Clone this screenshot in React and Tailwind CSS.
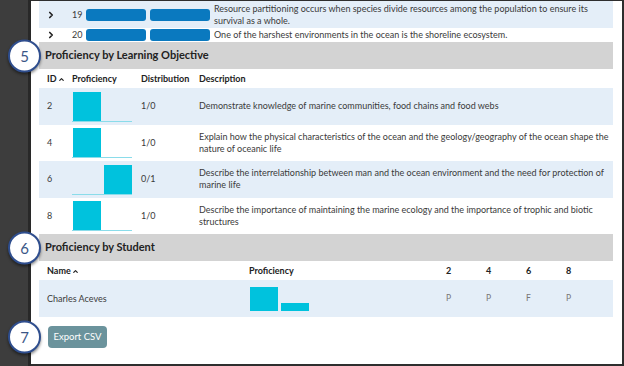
import { ChevronRight, ChevronUp } from "lucide-react"

const objectives = [
    { id: 2, bars: [1, 0], dist: '1/0', lines: ['Demonstrate knowledge of marine communities, food chains and food webs'] },
    { id: 4, bars: [1, 0], dist: '1/0', lines: ['Explain how the physical characteristics of the ocean and the geology/geography of the ocean shape the', 'nature of oceanic life'] },
    { id: 6, bars: [0, 1], dist: '0/1', lines: ['Describe the interrelationship between man and the ocean environment and the need for protection of', 'marine life'] },
    { id: 8, bars: [1, 0], dist: '1/0', lines: ['Describe the importance of maintaining the marine ecology and the importance of trophic and biotic', 'structures'] },
]

function Badge({ n, className = "left-[-31px]" }) {
    return (
        <div className={`absolute ${className} top-1/2 -translate-y-1/2 w-[33px] h-[33px] rounded-full bg-white border-[2.5px] border-[#2f4e8e] shadow-[0_2px_3px_rgba(0,0,0,0.45)] flex items-center justify-center text-[15px] font-normal text-[#3b5687]`}>
            {n}
        </div>
    )
}

function SectionHeader({ n, title }) {
    return (
        <div className="relative h-[27px] bg-[#d3d3d3] flex items-center pl-[6px] text-[11px] font-bold text-[#222]">
            <Badge n={n} />
            {title}
        </div>
    )
}

function SortCaret() {
    return <ChevronUp className="inline w-[7px] h-[7px] ml-[1px] align-middle" strokeWidth={4} />
}

function Chart({ bars, h }) {
    return (
        <div className="relative w-[60px] flex items-end gap-[3px] border-b border-[#8adcea]" style={{ height: h }}>
            {bars.map((b, i) => (
                <div key={i} className="w-[28px] shrink-0 bg-[#00c2dd] first:ml-[1px]" style={{ height: b * (h - 2) }} />
            ))}
        </div>
    )
}

export default function App() {
    return (
        <div className="w-[624px] h-[366px] bg-[#2e2e2e] flex overflow-hidden" style={{ fontFamily: 'Lato, "Open Sans", sans-serif' }}>
            <div className="w-[31px] shrink-0 bg-[#3d3d3d] border-r-[3px] border-[#282828]" />
            <div className="flex-1 bg-white mt-[1px] mr-[2px] mb-[2px] pl-[8px] pr-[9px] text-[9px] text-[#3a3a3a]">
                <div className="flex items-center h-[27px] bg-[#e4eef8] leading-[12px]">
                    <ChevronRight className="w-[10px] h-[10px] shrink-0 ml-[7px] text-[#222]" strokeWidth={4} />
                    <span className="w-[14px] shrink-0 ml-[16px]">19</span>
                    <div className="w-[60px] shrink-0 h-[12px] rounded-[3px] bg-[#0a79bf]" />
                    <div className="w-[60px] shrink-0 h-[12px] rounded-[3px] bg-[#0a79bf] ml-[4px]" />
                    <div className="ml-[4px] whitespace-nowrap">
                        <div>Resource partitioning occurs when species divide resources among the population to ensure its</div>
                        <div>survival as a whole.</div>
                    </div>
                </div>
                <div className="flex items-center h-[14px] leading-[12px]">
                    <ChevronRight className="w-[10px] h-[10px] shrink-0 ml-[7px] text-[#222]" strokeWidth={4} />
                    <span className="w-[14px] shrink-0 ml-[16px]">20</span>
                    <div className="w-[60px] shrink-0 h-[12px] rounded-[3px] bg-[#0a79bf]" />
                    <div className="w-[60px] shrink-0 h-[12px] rounded-[3px] bg-[#0a79bf] ml-[4px]" />
                    <span className="ml-[4px]">One of the harshest environments in the ocean is the shoreline ecosystem.</span>
                </div>

                <SectionHeader n={5} title="Proficiency by Learning Objective" />
                <div className="grid grid-cols-[33px_69px_58px_1fr] h-[19px] items-center font-bold text-[#222]">
                    <span className="pl-[8px]">ID<SortCaret /></span>
                    <span>Proficiency</span>
                    <span>Distribution</span>
                    <span>Description</span>
                </div>
                {objectives.map((o, i) => (
                    <div key={o.id} className={`grid grid-cols-[33px_69px_58px_1fr] h-[36.5px] items-center leading-[12px] ${i % 2 === 0 ? 'bg-[#e4eef8]' : 'bg-white'}`}>
                        <span className="pl-[8px]">{o.id}</span>
                        <Chart bars={o.bars} h={31} />
                        <span>{o.dist}</span>
                        <div className="whitespace-nowrap">
                            {o.lines.map(l => <div key={l}>{l}</div>)}
                        </div>
                    </div>
                ))}

                <SectionHeader n={6} title="Proficiency by Student" />
                <div className="grid grid-cols-[210px_197px_40px_40px_40px_1fr] h-[19px] items-center font-bold text-[#222]">
                    <span className="pl-[8px]">Name<SortCaret /></span>
                    <span>Proficiency</span>
                    <span>2</span>
                    <span>4</span>
                    <span>6</span>
                    <span>8</span>
                </div>
                <div className="grid grid-cols-[210px_197px_40px_40px_40px_1fr] h-[37px] items-center bg-[#e4eef8]">
                    <span className="pl-[8px]">Charles Aceves</span>
                    <div className="w-[60px] h-[25px] flex items-end gap-[3px]">
                        <div className="w-[28px] shrink-0 h-[24px] bg-[#00c2dd] ml-[1px]" />
                        <div className="w-[28px] shrink-0 h-[8px] bg-[#00c2dd]" />
                    </div>
                    <span className="text-[8.5px] text-[#777]">P</span>
                    <span className="text-[8.5px] text-[#777]">P</span>
                    <span className="text-[8.5px] text-[#777]">F</span>
                    <span className="text-[8.5px] text-[#777]">P</span>
                </div>

                <div className="relative mt-[9px] ml-[9px] w-[59px] h-[22px]">
                    <Badge n={7} className="left-[-40px]" />
                    <button className="w-full h-full rounded-[4px] bg-[#6b939c] text-white text-[9.5px]">Export CSV</button>
                </div>
            </div>
        </div>
    )
}
